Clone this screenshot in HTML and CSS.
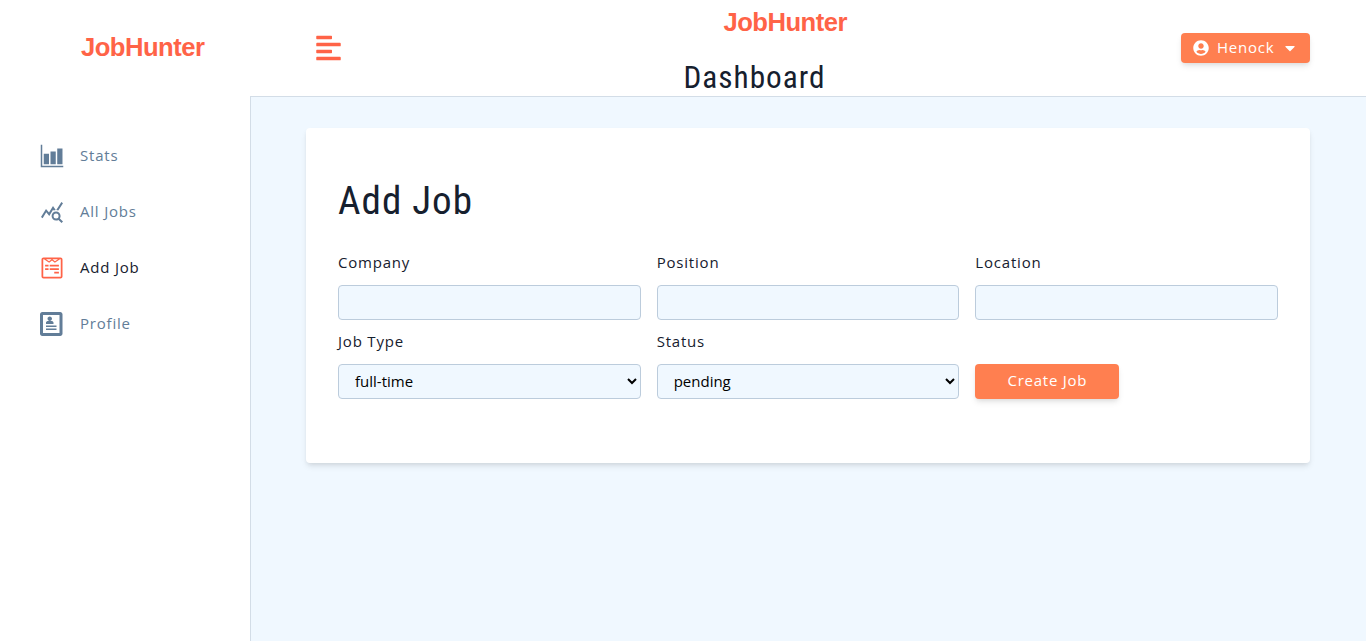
FILE: index.html
```
<!DOCTYPE html>
<html lang="en">
<head>
<meta charset="utf-8">
<title>JobHunter</title>
<link rel="stylesheet" href="styles.css">
</head>
<body>
<div class="dashboard">
  <aside class="sidebar">
    <header class="sidebar-header"><span class="logo">JobHunter</span></header>
    <nav class="nav-links">
      <a class="nav-link">
        <svg class="icon" viewBox="0 0 512 512"><path d="M496 496H16V16h32v448h448v32z"/><path d="M192 432H80V208h112zM336 432H224V160h112zM479.64 432h-112V96h112z"/></svg>
        <span>Stats</span>
      </a>
      <a class="nav-link">
        <svg class="icon" viewBox="0 0 24 24"><path d="M19.88 18.47c.44-.7.7-1.51.7-2.39 0-2.49-2.01-4.5-4.5-4.5s-4.5 2.01-4.5 4.5 2.01 4.5 4.49 4.5c.88 0 1.7-.26 2.39-.7L21.58 23 23 21.58l-3.12-3.11zm-3.8.11a2.5 2.5 0 010-5 2.5 2.5 0 010 5zm-.36-8.5c-.74.02-1.45.18-2.1.45l-.55-.83-3.8 6.18-3.01-3.52-3.63 5.81L1 17l5-8 3 3.5L13 6l2.72 4.08zm2.59.5c-.64-.28-1.33-.45-2.05-.49L21.38 2 23 3.18l-4.69 7.4z"/></svg>
        <span>All Jobs</span>
      </a>
      <a class="nav-link active">
        <svg class="icon" viewBox="0 0 448 512"><path d="M448 75.2v361.7c0 24.3-19 43.2-43.2 43.2H43.2C19.3 480 0 461.4 0 436.8V75.2C0 51.1 18.8 32 43.2 32h361.7c24 0 43.1 18.8 43.1 43.2zm-37.3 361.6V75.2c0-3-2.6-5.8-5.8-5.8h-9.3L285.3 144 224 94.1 162.8 144 52.5 69.3h-9.3c-3.2 0-5.8 2.8-5.8 5.8v361.7c0 3 2.6 5.8 5.8 5.8h361.7c3.2.1 5.8-2.7 5.8-5.8zM150.2 186v37H76.7v-37h73.5zm0 74.4v37.3H76.7v-37.3h73.5zm11.1-147.3l54-43.7H96.8l64.5 43.7zm210 72.9v37h-196v-37h196zm0 74.4v37.3h-196v-37.3h196zm-84.6-147.3l64.5-43.7H232.8l53.9 43.7zM371.3 335v37.3h-99.4V335h99.4z"/></svg>
        <span>Add Job</span>
      </a>
      <a class="nav-link">
        <svg class="icon" viewBox="0 0 16 16"><path d="M13.5 0h-12C.675 0 0 .675 0 1.5v13c0 .825.675 1.5 1.5 1.5h12c.825 0 1.5-.675 1.5-1.5v-13c0-.825-.675-1.5-1.5-1.5zM13 14H2V2h11v12zM4 9h7v1H4zM4 11h7v1H4zM5 4.5C5 3.672 5.672 3 6.5 3S8 3.672 8 4.5 7.328 6 6.5 6 5 5.328 5 4.5zM7.5 6h-2C4.675 6 4 6.45 4 7v1h5V7c0-.55-.675-1-1.5-1z"/></svg>
        <span>Profile</span>
      </a>
    </nav>
  </aside>
  <div class="content">
    <header class="navbar">
      <div class="nav-center">
        <button class="toggle" type="button" aria-label="Toggle sidebar">
          <svg viewBox="0 0 448 512"><path d="M12.83 352h262.34A12.82 12.82 0 00288 339.17v-38.34A12.82 12.82 0 00275.17 288H12.83A12.82 12.82 0 000 300.83v38.34A12.82 12.82 0 0012.83 352zm0-256h262.34A12.82 12.82 0 00288 83.17V44.83A12.82 12.82 0 00275.17 32H12.83A12.82 12.82 0 000 44.83v38.34A12.82 12.82 0 0012.83 96zM432 160H16a16 16 0 00-16 16v32a16 16 0 0016 16h416a16 16 0 0016-16v-32a16 16 0 00-16-16zm0 256H16a16 16 0 00-16 16v32a16 16 0 0016 16h416a16 16 0 0016-16v-32a16 16 0 00-16-16z"/></svg>
        </button>
        <div class="titles">
          <span class="logo">JobHunter</span>
          <h3>Dashboard</h3>
        </div>
        <button class="btn user-btn" type="button">
          <svg class="user-icon" viewBox="0 0 496 512"><path d="M248 8C111 8 0 119 0 256s111 248 248 248 248-111 248-248S385 8 248 8zm0 96c48.6 0 88 39.4 88 88s-39.4 88-88 88-88-39.4-88-88 39.4-88 88-88zm0 344c-58.7 0-111.3-26.6-146.5-68.2 18.8-35.4 55.6-59.8 98.5-59.8 2.4 0 4.8.4 7.1 1.1 13 4.2 26.6 6.9 40.9 6.9 14.3 0 28-2.7 40.9-6.9 2.3-.7 4.7-1.1 7.1-1.1 42.9 0 79.7 24.4 98.5 59.8C359.3 421.4 306.7 448 248 448z"/></svg>
          <span>Henock</span>
          <svg class="caret" viewBox="0 0 320 512"><path d="M31.3 192h257.3c17.8 0 26.7 21.5 14.1 34.1L174.1 354.8c-7.8 7.8-20.5 7.8-28.3 0L17.2 226.1C4.6 213.5 13.5 192 31.3 192z"/></svg>
        </button>
      </div>
    </header>
    <main class="page">
      <form class="card">
        <h2>Add Job</h2>
        <div class="form-grid">
          <div class="form-row"><label for="company">Company</label><input id="company" type="text"></div>
          <div class="form-row"><label for="position">Position</label><input id="position" type="text"></div>
          <div class="form-row"><label for="location">Location</label><input id="location" type="text"></div>
          <div class="form-row"><label for="type">Job Type</label><select id="type"><option>full-time</option></select></div>
          <div class="form-row"><label for="status">Status</label><select id="status"><option>pending</option></select></div>
          <button class="btn submit-btn" type="button">Create Job</button>
        </div>
      </form>
    </main>
  </div>
</div>
</body>
</html>
```
FILE: styles.css
```
* { box-sizing: border-box; margin: 0; padding: 0; }
body {
  font: 15px/24px "Open Sans", sans-serif;
  letter-spacing: 0.8px;
  color: #16202e;
  background: #f0f8ff;
}
svg { display: block; fill: currentColor; }
h2, h3 {
  font-family: "Roboto Condensed", Roboto, sans-serif;
  font-stretch: 75%;
  font-weight: 400;
  letter-spacing: 1px;
  color: #16202e;
}
.dashboard { display: grid; grid-template-columns: 251px 1fr; height: 641px; }
.sidebar { background: #fff; border-right: 1px solid #d3dde7; }
.sidebar-header { height: 96px; padding: 0 0 2px 81px; display: flex; align-items: center; }
.logo {
  font: bold 25.6px/30px "Liberation Sans", Arial, sans-serif;
  letter-spacing: -0.5px;
  color: #ff6347;
}
.nav-links { padding-top: 32px; }
.nav-link {
  display: flex;
  align-items: center;
  gap: 16px;
  height: 56px;
  padding-left: 40px;
  color: #627d98;
}
.nav-link span { padding-bottom: 2px; }
.nav-link.active { color: #16202e; }
.nav-link.active .icon { color: #ff6347; }
.icon { width: 24px; height: 24px; }
.navbar {
  height: 97px;
  margin-left: -1px;
  padding-left: 1px;
  background: #fff;
  border-bottom: 1px solid #d3dde7;
}
.nav-center {
  width: 1004px;
  height: 96px;
  margin-left: 55px;
  display: flex;
  align-items: center;
  justify-content: space-between;
}
.toggle { width: 44px; padding-left: 9.5px; border: 0; background: none; color: #ff6347; }
.toggle svg { width: 25px; height: 28px; }
.titles { width: 142px; height: 96px; margin-left: -22px; }
.titles .logo { display: block; margin: 8px 0 0 40px; line-height: 28px; }
.titles h3 { font-size: 31.25px; line-height: 40px; margin-top: 22px; }
.btn {
  border: 0;
  border-radius: 4px;
  background: #ff7f50;
  color: #fff;
  font: 500 15px/24px "Open Sans", sans-serif;
  letter-spacing: 0.75px;
  box-shadow: 0 4px 6px -1px rgba(0, 0, 0, 0.1), 0 2px 4px -1px rgba(0, 0, 0, 0.06);
}
.user-btn { width: 129px; height: 30px; padding: 0 12px; display: flex; align-items: center; }
.user-btn span { padding-bottom: 2px; }
.user-icon { width: 16px; height: 16px; margin-right: 8px; }
.caret { width: 10px; height: 16px; margin-left: auto; margin-right: 3px; }
.page { padding: 31px 0 0 55px; }
.card {
  width: 1004px;
  height: 335px;
  padding: 48px 32px;
  border-radius: 4px;
  background: #fff;
  box-shadow: 0 4px 6px -1px rgba(0, 0, 0, 0.1), 0 2px 4px -1px rgba(0, 0, 0, 0.06);
}
.card h2 { font-size: 39.06px; line-height: 50px; margin-bottom: 24px; }
.form-grid { display: grid; grid-template-columns: repeat(3, 1fr); column-gap: 16px; row-gap: 9px; }
.form-row label { display: block; height: 24px; margin-bottom: 11px; }
input, select {
  display: block;
  width: 100%;
  height: 35px;
  padding: 0 12px;
  border: 1px solid #bcccdc;
  border-radius: 4px;
  background: #f0f8ff;
  color: #000;
  font: 15px "Open Sans", sans-serif;
}
.form-row select { padding: 0 0 2px 12px; }
.submit-btn { width: 144px; height: 35px; padding-bottom: 3px; align-self: end; }
```
